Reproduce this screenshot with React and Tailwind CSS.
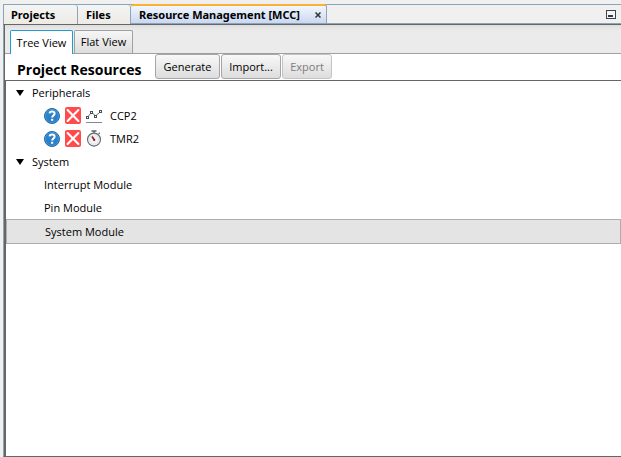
import React from "react";

function HelpIcon() {
  return (
    <svg viewBox="0 0 16 16" className="size-4" aria-hidden="true">
      <defs>
        <linearGradient id="help" x1="0" y1="0" x2="0" y2="1">
          <stop offset="0" stopColor="#2f86cd" />
          <stop offset="1" stopColor="#2a7cc4" />
        </linearGradient>
      </defs>
      <circle cx="8" cy="8" r="7.5" fill="url(#help)" stroke="#1f66a8" strokeWidth="1" />
      <circle cx="8" cy="8" r="6.6" fill="none" stroke="#5aa3dc" strokeWidth="0.6" />
      <path d="M5.5 5.4C5.8 4 6.7 3.5 8 3.5c1.6 0 2.6.8 2.6 2.1 0 1.9-2.4 2-2.4 3.9" fill="none" stroke="#fff" strokeWidth="2" />
      <rect x="7.1" y="10.8" width="2.1" height="2" fill="#fff" />
    </svg>
  );
}

function RemoveIcon() {
  return (
    <svg viewBox="0 0 16 17" className="h-[17px] w-4" aria-hidden="true">
      <rect width="16" height="17" rx="2" fill="#ff4b4b" />
      <path d="M2.6 3l10.8 11M13.4 3L2.6 14" stroke="#fff" strokeWidth="2.1" strokeLinecap="round" />
    </svg>
  );
}

function ChartIcon() {
  return (
    <svg viewBox="0 0 16 16" className="size-4" fill="none" aria-hidden="true">
      <path d="M1.5 9.5L5.5 4L9.5 8L14 4.2" stroke="#6d7478" strokeWidth="1" />
      <g fill="#fff" stroke="#465057" strokeWidth="1">
        <rect x="0.5" y="8.5" width="2" height="2" />
        <rect x="4.5" y="3.5" width="2" height="2" />
        <rect x="8.5" y="7.5" width="2" height="2" />
        <rect x="13.5" y="2.5" width="2" height="2" />
      </g>
      <path d="M0 14.5h16" stroke="#7d8a93" />
    </svg>
  );
}

function TimerIcon() {
  return (
    <svg viewBox="0 0 16 17" className="h-[17px] w-4" fill="none" aria-hidden="true">
      <path d="M5.5 1h5M8 1v2M12.6 3.8l1.2-1" stroke="#59636a" strokeWidth="1.3" />
      <circle cx="8" cy="9.6" r="6.5" fill="#f1f3f4" stroke="#626b70" strokeWidth="1.1" />
      <circle cx="8" cy="9.6" r="4.6" stroke="#c3cbd0" strokeWidth="1" strokeDasharray="0.8 1.6" />
      <path d="M6 6.6l2.3 3.4" stroke="#a51c24" strokeWidth="1.7" />
      <circle cx="8.2" cy="9.9" r="1.1" fill="#8d1b22" />
    </svg>
  );
}

function Group({ label, children }) {
  return (
    <li role="treeitem" aria-expanded="true">
      <div className="flex h-[23px] items-center gap-2 pl-2.5">
        <svg viewBox="0 0 8 6" className="h-1.5 w-2" aria-hidden="true">
          <path d="M0 0h8L4 6z" fill="#000" />
        </svg>
        {label}
      </div>
      <ul role="group">{children}</ul>
    </li>
  );
}

function Peripheral({ name, icon }) {
  return (
    <li role="treeitem" className="flex h-[23px] items-center gap-[5px] pl-[38px]">
      <button aria-label={"Help for " + name}><HelpIcon /></button>
      <button aria-label={"Remove " + name}><RemoveIcon /></button>
      {icon}
      <span className="pl-[3px]">{name}</span>
    </li>
  );
}

function Module({ name }) {
  return <li role="treeitem" className="flex h-[23px] items-center pl-[38px]">{name}</li>;
}

const tab = "h-[19px] border-r border-[#8aa4b8] bg-linear-to-b from-[#f4f4f4] to-[#ecebe5] text-left";
const action = "h-[25px] rounded-[3px] border border-[#a6a6a6] bg-linear-to-b from-[#f8f8f8] to-[#dddddd]";

export default function App() {
  return (
    <div className="flex h-screen flex-col bg-[#f0f0f0] pt-1 pl-[3px] font-['Open_Sans','Noto_Sans',sans-serif] text-[11px] leading-4 text-black">
      <div className="flex h-5 shrink-0 border-y border-l border-[#8aa4b8] font-['Noto_Sans','Open_Sans',sans-serif] text-[11px] leading-[19px] font-bold">
        <button className={tab + " w-[74px] rounded-tr-[3px] pl-[7px]"}>Projects</button>
        <button className={tab + " w-[53px] rounded-t-[3px] pl-2"}>Files</button>
        <div className="-mt-px flex h-[19px] w-[196px] items-center justify-between rounded-t-[3px] border-t-2 border-r border-t-[#f9b233] border-r-[#8aa4b8] bg-linear-to-b from-[#f2f6fd] to-[#cbd8f2] pr-[5px] pl-2">
          <button className="whitespace-nowrap">Resource Management [MCC]</button>
          <button aria-label="Close tab">
            <svg viewBox="0 0 6 6" className="size-1.5" aria-hidden="true">
              <path d="M0.5 0.5l5 5M5.5 0.5l-5 5" stroke="#333" strokeWidth="1.5" />
            </svg>
          </button>
        </div>
        <button aria-label="Minimize" className="mr-[5px] ml-auto">
          <svg viewBox="0 0 10 9" className="h-[9px] w-2.5" aria-hidden="true">
            <rect x="0.5" y="0.5" width="9" height="8" fill="#f4f4f4" stroke="#3c4350" />
            <rect x="2" y="5" width="5" height="2" fill="#353c48" />
          </svg>
        </button>
      </div>

      <main className="flex min-h-0 flex-1 flex-col border-t border-b border-l border-[#666666] border-l-[#8aa4b8] bg-white">
        <div className="flex min-h-0 flex-1 flex-col border-l border-[#666666]">
          <nav className="flex h-[29px] shrink-0 items-end border-b border-[#a0a0a0] bg-linear-to-b from-[#dedede] to-[#ebebeb] to-20% pl-[5px]">
            <button className="-mb-px h-6 w-[63px] rounded-t-[2px] border border-b-0 border-[#1c9fd0] bg-white whitespace-nowrap">Tree View</button>
            <button className="ml-px h-[23px] w-[59px] rounded-t-[2px] border border-b-0 border-[#a0a0a0] bg-linear-to-b from-[#f6f6f6] to-[#dddddd] whitespace-nowrap">Flat View</button>
          </nav>
          <div className="flex h-[27px] shrink-0 items-start gap-px border-b border-[#666666] pl-3">
            <h1 className="w-[137px] pt-1.5 text-sm leading-5 font-bold whitespace-nowrap">Project Resources</h1>
            <button className={action + " w-[65px]"}>Generate</button>
            <button className={action + " w-[60px]"}>Import...</button>
            <button disabled className={action + " w-[50px] border-[#c4c4c4] text-[#7c7c7c]"}>Export</button>
          </div>
          <ul role="tree" className="flex-1 border-l border-[#666666]">
            <Group label="Peripherals">
              <Peripheral name="CCP2" icon={<ChartIcon />} />
              <Peripheral name="TMR2" icon={<TimerIcon />} />
            </Group>
            <Group label="System">
              <Module name="Interrupt Module" />
              <Module name="Pin Module" />
              <li role="treeitem" aria-selected="true" className="flex h-[25px] items-center border border-[#adadad] bg-[#e4e4e4] pl-[38px]">System Module</li>
            </Group>
          </ul>
        </div>
      </main>
    </div>
  );
}
